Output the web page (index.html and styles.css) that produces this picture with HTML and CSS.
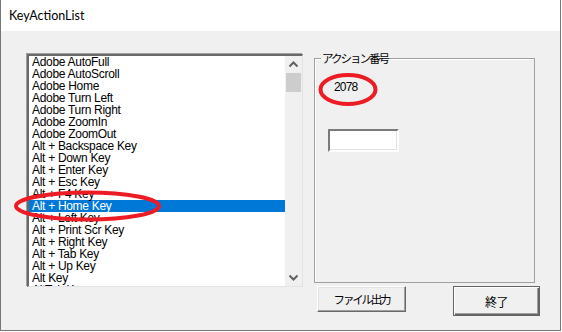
FILE: index.html
```html
<!DOCTYPE html>
<html lang="ja">
<head>
<meta charset="utf-8">
<title>KeyActionList</title>
<link rel="stylesheet" href="styles.css">
</head>
<body>
<div class="window">
  <div class="titlebar">KeyActionList</div>
  <div class="client">
    <div class="listbox">
      <ul class="items">
        <li>Adobe AutoFull</li>
        <li>Adobe AutoScroll</li>
        <li>Adobe Home</li>
        <li>Adobe Turn Left</li>
        <li>Adobe Turn Right</li>
        <li>Adobe ZoomIn</li>
        <li>Adobe ZoomOut</li>
        <li>Alt + Backspace Key</li>
        <li>Alt + Down Key</li>
        <li>Alt + Enter Key</li>
        <li>Alt + Esc Key</li>
        <li>Alt + F4 Key</li>
        <li class="selected">Alt + Home Key</li>
        <li>Alt + Left Key</li>
        <li>Alt + Print Scr Key</li>
        <li>Alt + Right Key</li>
        <li>Alt + Tab Key</li>
        <li>Alt + Up Key</li>
        <li>Alt Key</li>
        <li>AltTab Key</li>
      </ul>
      <div class="scrollbar">
        <div class="sb-btn">
          <svg width="17" height="17" viewBox="0 0 17 17"><polyline points="4.5,10.5 8.5,6.5 12.5,10.5" fill="none" stroke="#606060" stroke-width="2"/></svg>
        </div>
        <div class="sb-track"><div class="sb-thumb"></div></div>
        <div class="sb-btn">
          <svg width="17" height="17" viewBox="0 0 17 17"><polyline points="4.5,6.5 8.5,10.5 12.5,6.5" fill="none" stroke="#606060" stroke-width="2"/></svg>
        </div>
      </div>
    </div>
    <div class="side">
      <fieldset class="group">
        <legend>アクション番号</legend>
        <div class="group-body">
          <div class="number">2078</div>
          <div class="textbox"></div>
        </div>
      </fieldset>
      <div class="buttons">
        <button class="btn btn-file">ファイル出力</button>
        <button class="btn btn-default">終了</button>
      </div>
    </div>
  </div>
  <svg class="mark mark-number" width="64" height="38" viewBox="0 0 64 38"><ellipse cx="31" cy="18.5" rx="27.5" ry="14.5" fill="none" stroke="#ed1c24" stroke-width="4"/></svg>
  <svg class="mark mark-item" width="152" height="36" viewBox="0 0 152 36"><ellipse cx="75.5" cy="17" rx="71.5" ry="13.5" fill="none" stroke="#ed1c24" stroke-width="4"/></svg>
</div>
</body>
</html>
```
FILE: styles.css
```css
html, body {
  margin: 0;
  padding: 0;
  background: #ffffff;
}

.window {
  position: relative;
  width: 561px;
  height: 331px;
  box-sizing: border-box;
  border-left: 1px solid #777777;
  border-right: 1px solid #777777;
  border-bottom: 1px solid #777777;
  background: #f0f0f0;
  display: flex;
  flex-direction: column;
  overflow: hidden;
}

.titlebar {
  height: 31px;
  flex: none;
  background: #ffffff;
  padding-left: 8px;
  display: flex;
  align-items: center;
  font-family: Lato, "Noto Sans", sans-serif;
  font-size: 12.5px;
  line-height: 16px;
  color: #000000;
}

.client {
  flex: 1;
  display: flex;
  align-items: flex-start;
  padding: 21px 0 0 26px;
}

.listbox {
  margin-top: 2px;
  width: 276px;
  height: 233px;
  box-sizing: border-box;
  display: flex;
  border-style: solid;
  border-width: 2px 1px 1px 2px;
  border-color: #696969 #e3e3e3 #e3e3e3 #696969;
  box-shadow: -1px -1px 0 #a0a0a0;
  background: #ffffff;
}

.items {
  list-style: none;
  margin: 0;
  padding: 0;
  flex: 1;
  height: 230px;
  overflow: hidden;
  font-family: "Liberation Sans", Arial, sans-serif;
  font-size: 12px;
  line-height: 12px;
  letter-spacing: -0.3px;
  color: #000000;
}

.items li {
  height: 12px;
  padding-left: 3px;
  white-space: nowrap;
}

.items li.selected {
  background: #0078d7;
  color: #ffffff;
}

.scrollbar {
  width: 17px;
  flex: none;
  display: flex;
  flex-direction: column;
  background: #f0f0f0;
}

.sb-btn {
  height: 17px;
  flex: none;
}

.sb-btn svg {
  display: block;
}

.sb-track {
  flex: 1;
}

.sb-thumb {
  height: 19px;
  margin: 0 1px;
  background: #cdcdcd;
}

.side {
  margin-left: 11px;
  display: flex;
  flex-direction: column;
}

.group {
  margin: 0;
  width: 221px;
  height: 231px;
  box-sizing: border-box;
  border: 1px solid #a0a0a0;
  box-shadow: inset 1px 1px 0 #ffffff;
  padding: 0;
  font-family: "Liberation Sans", Arial, sans-serif;
  font-size: 12px;
}

.group legend {
  margin-left: 6px;
  padding: 0 2px 0 1px;
  font-family: "Noto Sans CJK JP", sans-serif;
  font-size: 11.5px;
  line-height: 12px;
  letter-spacing: -2px;
}

.group-body {
  display: flex;
  flex-direction: column;
  align-items: flex-start;
  padding-left: 13px;
}

.number {
  margin-top: 16px;
  margin-left: 6px;
  height: 14px;
  line-height: 14px;
  letter-spacing: -0.8px;
  color: #000000;
}

.textbox {
  margin-top: 35px;
  width: 71px;
  height: 23px;
  box-sizing: border-box;
  background: #ffffff;
  border-style: solid;
  border-width: 2px;
  border-color: #7a7a7a #ffffff #ffffff #7a7a7a;
  box-shadow: inset -1px -1px 0 #e3e3e3;
}

.buttons {
  display: flex;
  align-items: flex-start;
  margin-top: 3px;
  padding-left: 3px;
}

.btn {
  margin: 0;
  padding: 0;
  background: #f0f0f0;
  font-family: "Noto Sans CJK JP", sans-serif;
  font-size: 12px;
  color: #000000;
  box-sizing: border-box;
}

.btn-file {
  width: 89px;
  height: 26px;
  border-style: solid;
  border-width: 1px;
  border-color: #ffffff #696969 #696969 #ffffff;
  box-shadow: inset -1px -1px 0 #a0a0a0, inset 1px 1px 0 #e3e3e3;
  font-size: 11.5px;
  letter-spacing: -2.2px;
}

.btn-default {
  margin-left: 47px;
  width: 87px;
  height: 30px;
  border: 1px solid #646464;
  box-shadow: inset 1px 1px 0 #ffffff, inset -1px -1px 0 #646464, inset -2px -2px 0 #a0a0a0;
  letter-spacing: -0.5px;
}

.mark {
  position: absolute;
  display: block;
}

.mark-number {
  left: 316px;
  top: 71px;
}

.mark-item {
  left: 11px;
  top: 189px;
}
```
